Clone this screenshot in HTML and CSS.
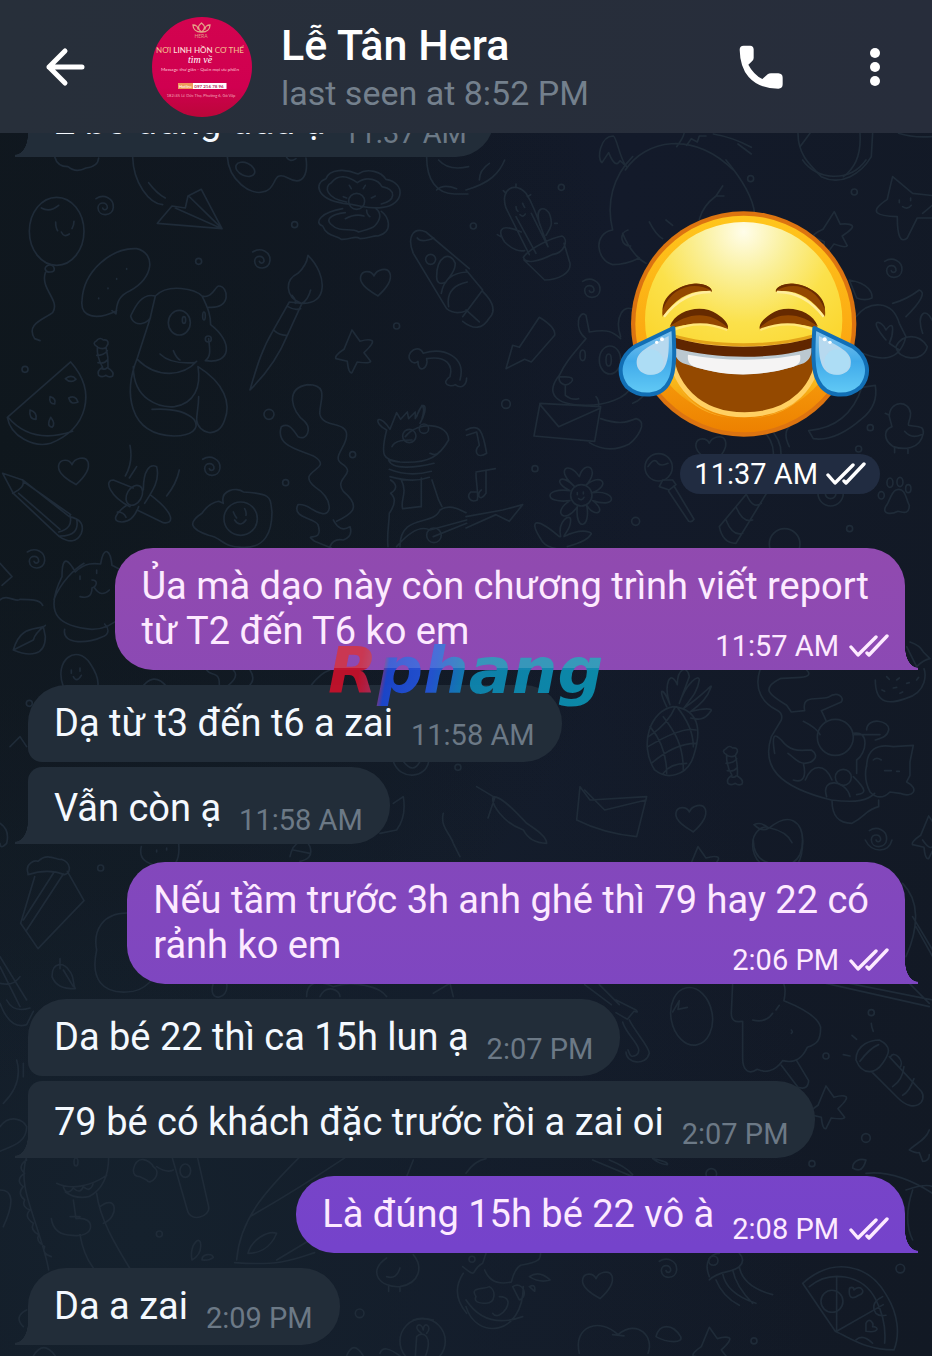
FILE: index.html
```html
<!DOCTYPE html>
<html lang="vi">
<head>
<meta charset="utf-8">
<meta name="viewport" content="width=device-width, initial-scale=1">
<title>Lễ Tân Hera</title>
<link rel="stylesheet" href="styles.css">
</head>
<body>
<svg class="defs" width="0" height="0" aria-hidden="true">
  <defs>
    <symbol id="checks" viewBox="0 0 40 24"><path d="M2 13l7 8L27 3M18 19l2 2L38 2" fill="none" stroke="currentColor" stroke-width="3.4" stroke-linecap="round" stroke-linejoin="round"/></symbol>
  </defs>
</svg>

<div class="app">
  <header class="topbar">
    <button class="icon-btn" type="button" aria-label="Back">
      <svg width="40" height="40" viewBox="0 0 40 40"><path d="M37 20H4M20 4L4 20l16 16" fill="none" stroke="#fff" stroke-width="5" stroke-linecap="round" stroke-linejoin="round"/></svg>
    </button>
    <svg class="avatar" viewBox="0 0 100 100" role="img" aria-label="Hera">
      <defs><linearGradient id="av" x1="0" y1="0" x2="0" y2="1"><stop offset="0" stop-color="#d3034f"/><stop offset=".7" stop-color="#d00050"/><stop offset="1" stop-color="#bb0639"/></linearGradient></defs>
      <circle cx="50" cy="50" r="50" fill="url(#av)"/>
      <g fill="none" stroke="#e5a487" stroke-width="1.3" stroke-linecap="round"><path d="M49 15c-5 0-8-3-8-7 3 0 5 2 5 4M50 15c5 0 8-3 8-7-3 0-5 2-5 4M49.500 15c-4-3-4-6 0-9 4 3 4 6 0 9"/></g>
      <g text-anchor="middle" font-family="Lato, sans-serif">
        <text x="49" y="21" font-size="5" fill="#e39b83">HERA</text>
        <text x="48" y="36" font-size="8" font-weight="500" fill="#f3bd8d">NƠI <tspan fill="#ffe3de">LINH HỒN</tspan> CƠ THỂ</text>
        <text x="48" y="46" font-size="10" font-style="italic" font-family="Liberation Serif, serif" fill="#fff">tìm về</text>
        <text x="48" y="54" font-size="4.600" fill="#ffc7d5">Massage thư giãn - Quên mọi ưu phiền</text>
        <rect x="26" y="66" width="48.500" height="6" fill="#fff"/><rect x="26" y="66" width="15" height="6" fill="#ef9a5a"/>
        <text x="33.500" y="70.500" font-size="4" fill="#fff">Hotline</text>
        <text x="57" y="70.500" font-size="4.500" font-weight="700" fill="#b53162">097 216 78 96</text>
        <text x="49" y="80" font-size="4" fill="#f5a5b8">182/45 Lê Đức Thọ, Phường 6, Gò Vấp</text>
      </g>
    </svg>
    <div class="peer">
      <h1 class="peer-name">Lễ Tân Hera</h1>
      <p class="peer-status">last seen at 8:52 PM</p>
    </div>
    <button class="icon-btn" type="button" aria-label="Call">
      <svg width="46" height="46" viewBox="415 130 138 138"><path d="M420 147q0-12 12-12h20q9 0 10 11v26q0 6-5 10l-11 10q16 30 42 43l16-14q4-3 10-3h22q13 1 13 13v20q0 13-13 13-58 0-89-35-26-30-27-82z" fill="#fff"/></svg>
    </button>
    <button class="icon-btn menu-btn" type="button" aria-label="More options">
      <svg width="12" height="40" viewBox="0 0 12 40" fill="#fff"><circle cx="6" cy="6" r="5"/><circle cx="6" cy="20" r="5"/><circle cx="6" cy="34" r="5"/></svg>
    </button>
  </header>

  <main class="chat">
    <svg class="wallpaper" viewBox="0 133 932 1223" preserveAspectRatio="xMidYMid slice" aria-hidden="true">
      <defs>
        <path id="heart" d="M0 36C-28 20-50 2-46-18c4-20 32-20 40-2C2-40 34-48 42-28 50-4 26 22 6 40z"/>
        <path id="star" d="M-12-62l24 34q26-8 36-2 8 6-24 36l20 26q-2 8-40 2l-16 32q-10 4-14-34l-34-8q-6-8 24-28z"/>
        <path id="spiral" d="M-24-22C0-38 30-22 28 4 26 32-16 34-18 6-18-14 12-14 10 6 6 14-2 12-4 6"/>
        <circle id="dot" r="9"/>
        <g id="candy"><path d="M-18-40q-18-10-2-18 10-12 20-2 16-2 14 12l-6 10q8 30 6 62 20 12 14 24-10 6-20-2-12 8-22 0-6-14 12-24-18-30-16-62zM-18-38q16 8 26 0M-20-14q22 0 32-14M-16 8q20 4 28-8M-4 26q10 4 14-2"/></g>
      </defs>
      <g class="doodles">
        <g transform="translate(0 160) scale(.3333)">
          <ellipse cx="170" cy="214" rx="82" ry="102"/><path d="M124 144q26 14 52-8M167 186q0 18 6 26M222 184q0 12-6 22M184 216q8 18 24 6M150 314c-24 6-14 24 0 22 20 2 14-20 0-22M136 338c-16 50 46 82 22 120-26 20-82 34-54 78l16 6"/>
          <path d="M398-10c2 80 50 140 90 144M446 68q24 32 50 46M472 190l44-52 40 6 8-36 40-20 62 118zM526 144l140 62M566 108l100 98"/>
          <path d="M682-10c4 70 70 120 114 104 36-10 20-66 68-40 50 28 60-20 54-60"/><ellipse cx="736" cy="28" rx="30" ry="19" transform="rotate(25 736 28)"/><path d="M860-8q10 16 28 4M164-10q8 30 40 30 24 20 54 4 36-4 38-30"/>
          <path d="M1030 130c-80-12-90-60-52-74 10-30 60-30 96-14 30-20 70-6 84 16 60 10 56 76-10 84-40 8-60-6-118-12zM1040 126c-60-10-70-46-46-58 20-26 50-20 78 0 30-22 64-8 74 12 46 10 40 42-2 52M1028 146c-60 10-90 40-60 52 14 34 40 26 56 40 30 2 40-14 56-2 24 0 40-10 54-8 50-14 30-60 10-74M1036 158c-50 6-56 22-44 34 30 30 60 8 84 24 20-6 40-10 48-18 20-20 20-40 4-52M1036 176q30-16 56-8M1100 150q0 14 10 20"/><circle cx="1070" cy="124" r="24"/><path d="M1048 76l6 10M1096 76l-6 10M1030 110l10 4M1126 108l-12 6"/>
          <path d="M1280-10c0 70 30 112 84 112h40M1316 0q30 34 90 20M1310 90q20-20 60-4"/>
          <path d="M1340 446L1240 280c-20-50 0-80 38-64l130 110M1340 446q24 20 60 6M1252 234q10 16 50 0M1310 350c0-60 40-80 56-40 0 30-20 40-28 56-20 10-28 0-28-16zM1324 400q10-60 76-64M1346 440q-10-60 56-74"/><circle cx="1292" cy="298" r="15"/>
          <path d="M350 452c-60 30-110 20-104-30 4-90 90-160 164-156 60 14 50 90-20 126-30 14-40 30-42 70l-12-10M350 356v2M380 326v2M324 384v2M296 414v2"/>
          <path d="M466 408c-40-10-60 30-74 60 10 40 60 20 60 0l14-60c40-40 120-20 140 0 20 40 26 60 26 86 70 54 60 120-16 108 20-14 12-40 10-66M606 408c30 10 40-30 50-30 30 0 40 70-30 64M452 470l-40 124c-40 100-30 230 110 234 50 0 80-20 60-50-20-20-60-34-126-30M412 598c60 60 140 50 178 6M400 620c0 100 80 124 124 120 60-10 80-60 70-120 80 50 100 110 80 160-20 60-80 40-84 0 0-20 6-40 6-70M480 582c20 20 50 30 104 26M520 572q10 24 20 28"/><ellipse cx="538" cy="488" rx="33" ry="37"/><ellipse cx="552" cy="480" rx="5" ry="10"/><ellipse cx="612" cy="468" rx="4" ry="12"/><circle cx="625" cy="537" r="9"/>
          <path d="M212 606c80 90 50 200-60 244-50 14-120-20-130-78zM24 772c60 70 140 60 194 42M196 656q20-14 32 2-16 14-32-2zM206 714q20-10 28 12-22 10-28-12zM150 710q20 6 14 22-18 0-14-22zM90 750q22 6 18 28-22 0-18-28zM152 772q16 20 4 30-18-4-4-30z"/>
          <path d="M924 286c60 60 60 150-20 144-50-20-50-70-10-90q26-24 30-54zM876 406q14 16 10 24M932 390q-8 30-26 40M868 426l-50 88c-30 50-46 100-68 176 60-60 90-110 112-164l44-96zM864 440q20 12 38 6M820 510q20 18 42 16"/>
          <path d="M924 674c70 0 30 60 36 90 10 40 80 20 80 60 0 40-50 70-10 90 40 30-30 40 0 80 60 50 20 70-20 90M924 674c-70 10-50 80-10 110 20 20 10 60-20 46-20-30-30-40-50-30-20 60 60 70 100 90 60 40-60 40 0 90 60 40 50 90 20 80-30-6-40-30-70-26-20 40 50 40 60 60 20 60-50 20-10 50l50 20M1000 1080q20 40 50 20 10 30-20 40-30-6-40 20"/>
          <path d="M1160 810c-40-20-30-50 0-16l10 14 20-50 12 20 20-22 4 20 20-20 0 20 20-40q10 10 0 40M1160 810c-20 80-10 90 40 96 90 6 120-20 146-66 0-50-90-60-130-10M1176 860c10-20 40-20 60-20M1250 770c20-60 40-30 10 20M1166 900c10 30 80 24 136 10M1168 928q60 24 126 6M1170 950q70 20 118 2M1204 960c20 40-4 60 4 86M1264 954v86M1210 1046l50-6M1172 960q30 20 0 40 24 20-4 60c0 30-8 60-4 100M1296 960l20 60 10 20M1200 1160c0-100 100-60 120-110 30-20 60 0 78 8M1290 1110l110-30M1300 1130l100-40M1190 1160q60-70 100-50M1290 880q20 10 30-6"/><circle cx="1228" cy="828" r="20"/><circle cx="1272" cy="806" r="14"/><circle cx="1302" cy="1126" r="22"/>
          <path d="M1240 570c-30 20 0 50 14 34 0 40 34 20 26-8 60-10 80 20 70 54-30 20 0 34 16 24 20 16 34-2 34-20M1240 570q20-10 30 10c60-20 130 10 110 80"/>
          <path d="M8 940l60 20 140 110q50 10 36 50-20 40-66 10L40 1000zM68 960q10 20-30 40M72 966l140 98M56 1000l124 108M210 1066q10 40-34 50M230 1078q10 50-50 50"/>
          <path d="M390 1040c-60-30-80-80-50-80l60 24M430 990c0-60 20-80 40-70 10 40-10 70-36 110M450 1004c80 60 70 90 40 84l-74-36M380 1036c-30 20-50 50-14 50 30 0 44-30 50-46M352 1056q20 0 26 16M390 856q10 50-14 92M410 920l-22 34M538 930q-8 40-38 78"/><ellipse cx="403" cy="1006" rx="22" ry="32" transform="rotate(30 403 1006)"/>
          <path d="M670 1030c-10-40 40-50 60-34 90 4 80 20 86 60 0 60-20 110-90 106-60 0-60-30-100-36-60-20-60-40-20-66q20-30 50-36zM700 1056q4 10 10 18M734 1046q6 10 4 20M704 1080q16 24 34 0"/><circle cx="722" cy="1076" r="50"/>
          <use href="#heart" x="1128" y="368"/><use href="#heart" x="222" y="934"/><use href="#star" x="1068" y="572"/><use href="#candy" x="310" y="600"/>
          <use href="#spiral" x="312" y="138"/><use href="#spiral" x="782" y="298"/><use href="#spiral" x="632" y="920"/>
          <use href="#dot" x="884" y="194"/><use href="#dot" x="596" y="304"/><use href="#dot" x="1190" y="498"/><use href="#dot" x="75" y="628"/><circle cx="807" cy="763" r="15"/><use href="#dot" x="1058" y="884"/><use href="#dot" x="857" y="968"/>
        </g>
        <g transform="translate(600 0) scale(.3333)">
          <path d="M80 500c-20-20-30-90-40-92-40 0-50 70-34 80l20-30q20 50 34 24zM76 510c60-90 200-120 324 0M230 440q30-40 20-50M260 436l14-20 18 10 6-18 20 0M340 402q60 10 114 40M414 432l40 30M594 400c0 60 30 90 70 130 60 30 120-10 150-60l4-70M600 440l30-40M780 400q6 90-50 130M896 400q40 14 100 10"/>
        </g>
        <g transform="translate(466 160) scale(.3333)">
          <path d="M0 90c70-20 100-50 116-90M40 60q0-30 30-50"/>
          <path d="M190 284l-70-140c-20-60 30-80 60-44 20 30 30 60 66 160M196 160l50 100M150 170l60 110M166 216c-70-30-70 0-50 30 20 20 40 30 60 26M222 196c-20-60 20-60 30-30 10 30 0 40-12 60M172 292c20-30 90-60 116-64 20 10 10 50-30 56-40 20-80 30-86 8zM174 300l62 60c40 0 80-20 76-50l-18-60M120 100l-8-8M150 82v-10M184 110l10-6M104 230l-10-6M266 190h8M150 140q0 10 6 14M170 130q4 10 6 12M162 164q10 10 16-2"/>
          <path d="M500-10c-60 60-80 140-60 220-60 10-50 90 0 104 30 0 60-10 80-20M780 0c50 60 80 110 86 160M486 210c-30 10-20 50 8 48M470 220c20 50 50 80 70 90M550 186q20 40 40 50M770 78l-20 30h24M750 108q-40 30-50 70M600 180l20 16"/>
          <path d="M1280 50l60 50 90 10-60 50M1280 50q-10 40-16 68c-60 40-30 50 30 52 0 60 10 80 30 64l30-60h60M1300 120v8M1334 114v8M1310 140q16 10 26-4M1010 0c40 60 140 70 190 0"/>
          <use href="#star" x="1106" y="218" transform="rotate(10 1106 218)"/>
          <path d="M120 626l20-70 20 6 60-90q50 30 46 54l-70 80-20-8z"/>
          <path d="M0 330l50 60-60 80M50 394q50 50 20 80-30 50-80 10M0 450l40 36"/>
          <path d="M360 536c-40-30-20-90 0-70l10 50c60-10 70 0 94 20M360 536c-50 60-60 70-80 110-40 50-20 90 80 90 60 0 120-20 140-60M464 530c-20-60 10-100 40-80l14 40M280 650c20 0 50 0 36 16-20 20-40 0-36-16zM298 676v30q20 16 40 10M500 730q30-10 50-50M390 710q10 10 8 30"/><ellipse cx="432" cy="600" rx="32" ry="42"/><ellipse cx="428" cy="600" rx="8" ry="18"/><ellipse cx="350" cy="586" rx="8" ry="16"/>
          <path d="M222 730l182 10-18 104-182-16zM222 734l56 66 126-56M404 776c60 20 80 10 106 0 40 10 0 60-20 76-40 20-80 20-120-4"/>
          <path d="M0 810c40-20 50 0 62 70-30 20-40-10-22-24l-8-40-30 10M30 936l58-10M30 940c0 30 8 60 4 80-20 10-34-10-20-24h20M60 930v70c-20 30-30 0-14-10M0 1070l110-20 60-16-40 50-40-20-90 40"/>
          <g transform="translate(346 1006)"><circle r="32"/><path d="M-20-26c-60-50-20-80 14-30C10-110 60-80 14-30 60-70 90-30 34-8c70-10 80 50 0 24C80 50 40 70 16 30 30 100-20 110-12 34-50 90-90 50-34 16c-80 10-80-40 0-30C-90-40-60-70-20-26M-12-8v6M6-10v6M-8 10q10 8 16-4"/></g>
          <path d="M280 1130c-70-60-90-50-60 0 10 20 20 30 50 36M284 1130c-10-50 30-70 30-50 0 30-20 40-20 50 60-30 90-10 80-6-10 20-50 30-70 36"/>
          <circle cx="578" cy="922" r="41"/><path d="M546 920q20-30 30-10 10 10 30 0M590 960l-10 20 30 10 20-16-10-14zM608 994l60 90q10 4 16-6l-60-100"/>
          <use href="#heart" x="736" y="870"/><path d="M860 980l-100 120q10 50 50 50l110-180M780 1080q20 50 50 40M810 1040q20 50 50 40M840 1000q20 50 46 30"/><circle cx="1094" cy="1000" r="38"/><circle cx="1094" cy="1000" r="16"/><circle cx="956" cy="1152" r="46"/>
          <path d="M1228 676q10 60-40 100-80 70-146 60l-14-24q120-10 160-130zM900 820q30 40 20 80M924 820q30 40 18 86M970 800q-20 20 0 60"/>
          <path d="M1270 770c0-50 60-50 64-10 0 20-10 30-6 36 30 6 46 0 44 24-10 50-60 50-90 40-30-20-30-50-4-60zM1270 766l-12-6M1316 814q20 24 50 10M1286 864v14M1326 864v16"/>
          <path d="M1150 360c60 10 70 40 68 54q-20 10-46 0zM1170 470c40-50 110-50 130 20l20 40c-20 80-80 70-130 50M1280 430q40-10 80-40 30 10-40 80M1260 540c-60-70-10-60 0-30 30-40 20 20 10 40l30 20M1290 560c20-40 70-40 94 0-10 50-90 40-94 0zM1370 520c-20-60 10-80 28-40"/>
          <path d="M1290 990c30-10 30 30 40 46 0 30-20 20-34 18-20 10-50 10-36-16 10-10 14-40 30-48z"/><ellipse cx="1272" cy="968" rx="9" ry="14"/><ellipse cx="1302" cy="966" rx="9" ry="14"/><ellipse cx="1327" cy="986" rx="8" ry="12"/><ellipse cx="1246" cy="1006" rx="9" ry="11"/>
          <use href="#spiral" x="374" y="386"/><use href="#spiral" x="1280" y="326"/>
          <use href="#dot" x="286" y="82"/><use href="#dot" x="22" y="198"/><circle cx="120" cy="732" r="13"/><use href="#dot" x="207" y="926"/><circle cx="509" cy="1084" r="12"/><use href="#dot" x="854" y="56"/><use href="#dot" x="1165" y="96"/><use href="#dot" x="1213" y="803"/><use href="#dot" x="1178" y="867"/><use href="#dot" x="1151" y="1106"/>
        </g>
        <g transform="translate(0 440) scale(.3333)">
          <path d="M186 410c0-70 20-50 40-14 30-30 60-26 76-24 10-60 30-40 34 4l20 10M162 478c20-50 60-90 90-108M186 410c-60 120 0 150 90 158 40 0 70-20 90-40M194 568c-10 50 80 40 110 24 30-10 20-30 10-40M240 408v10M290 390v10M276 420c20 0 14 20 0 24 0 30-20 30-36 26M284 444q20 30 44 6M0 370l36 40-30 26M0 480c20-20 50 10 60-2 30 0 60 0 68 18"/>
          <path d="M40 630c20-70 60-60 90-70l6 30c0 60-50 60-96 40l60-30q4-20 36-44M190 740c-30-80 40-130 80-70 20 30 30 60 20 80M214 690v10M240 684v10M220 710q10 20 24-4M420 750q40-60 80-10M620 690c10 20 40 0 38 46M700 690q20 20-20 50M750 690q20 30-6 50M930 740q30-40 60-50"/>
          <use href="#spiral" x="106" y="358"/>
        </g>
        <g transform="translate(640 600) scale(.3333)">
          <path d="M100 320c90 10 80 90 60 150-20 60-80 70-116 40-50-80-10-180 56-190zM70 350c30 40 60 80 60 160M110 320q50 60 50 120M26 410q60-40 80-90M24 440q100-60 144-50M34 490q70-60 134-60M70 520q20-30 70-30M30 380q50 60 50 140M80 320c-30-60-10-60 10-6-20-60 0-110 22-60 0-50 30-60 36-24l-30 80c20-60 60-90 60-70-6 40-30 60-46 84 60-40 90-80 80-60-10 30-30 50-60 70 40-10 70-10 60 0-20 30-40 24-60 20"/>
          <path d="M500 210c30 30-50 20-80 26-60 30-30 50 20 80l14 20 40-4c-10-50 40-30 70-40 30-20 50 0 40 14l-60 26q10 20 14 30M360 210c-20 60 10 100 50 120q20 10 14 30l-30 50c-30 90 20 150 180 190 80 10 110 0 130-20M404 460c-10-60 0-60 20-40 30 40 60 30 90 30 30 20 0 40-20 40s-30-16-50-30M490 364q40 20 50 40M496 540c20-50 60-50 80 0M640 400c50-10 40 60 10 80v40M640 404h80M680 390c0-40 70-30 66 0-4 20-20 24-40 30M680 500c0-50 30-70 80-60l60-4-10 50 0 40-10 20c40 20 20 50-20 34l-30-4c-20 20-40 20-60 0q-20-40-10-80zM700 480q10-10 24 0M734 512h20M770 514h8M576 600c0 50 20 70 60 70 40-20 40-40 80-50V600M560 590c-20-60 60-50 70 0M640 530c40 40 40 50 10 54M490 490c10 40 0 60-30 50"/><circle cx="586" cy="412" r="54"/><circle cx="610" cy="532" r="24"/>
          <path d="M706 240c0 80 50 70 90 56 70-20 60-80 56-90M800 140l30 60q20-20 40-24l-20-20q-10-20-40-30M740 230l8 8M770 240l8-6M726 270l8 4M760 264l10-2M800 250l8-2M830 240l6-8M780 280l8-4"/>
          <use href="#candy" x="278" y="504"/><use href="#heart" x="154" y="656"/><path d="M388 684c60-50 100-20 100 40 0 60-20 90-60 90-60 0-90-40-90-80 0-40 30-60 50-50M390 684q50 10 66 44M342 674q20-10 44 10-20 14-44-10z"/><use href="#spiral" x="712" y="714" /><use href="#star" x="878" y="710"/><use href="#star" x="186" y="802"/>
          <path d="M-180 560l30 40 170-10-30 120q-100-10-180-50zM-166 570l60 60 124-30M-350 690c-60-20-100-80-90-100 30 0 80 60 100 80 30 20 60 40 60 60-40 0-60-20-70-40zM-440 590l-50-30M-436 594l-20 60"/>
        </g>
        <g transform="translate(0 670) scale(.3333)">
          <path d="M84 610c-10-30 20-40 30-36 30-30 60 0 70-6 30 10 30 40 10 46q-50-20-110 0zM104 620L62 760l52 76 138-144-50-88M160 610L70 750M190 612L80 780M30 230l30-30 20 30M0 460q30 20 20 60-20 20-20 0M424 530c-10 40 20 50 50 60M470 540v6M500 534v6M536 520q4 40-10 60M870 560c10-50 50-60 60-30 10 30-10 40-30 44M880 540l50 10M1180 274c20 60 100 50 106 0M1210 274q30 40 50 0M1330 430c-10 40 20 60 30 90l20 40M1180 400l30-20q10 60-20 100l-50 10"/>
          <path d="M400 730c-100-10-120 60-110 110-20 90 20 130 90 126 40 0 60-20 70-30M156 920c0-50 40-40 50-20 20 20 10 40 20 56-40 0-60-10-70-36zM180 866v30M190 900l30 50M0 860l80 130M0 890l60 120M0 940q40 10 60-20M640 940c-20 60 50 50 40 0M920 980c0-60 60-40 80-30 60-20 140 0 160 30M960 980c20-40 60-20 60 0M1300 970l50-30 10 40"/>
          <use href="#dot" x="302" y="594"/><use href="#dot" x="88" y="100"/><use href="#dot" x="1374" y="292"/>
        </g>
        <g transform="translate(466 840) scale(.3333)">
          <ellipse cx="677" cy="529" rx="62" ry="87" transform="rotate(-10 677 529)"/><path d="M620 516l20-34-4 26 28-6M800 430l-4 90q0 30 30 24M830 544v110c0 40 20 50 44 34 20 10 50 10 76-26 40 10 60-10 74-40 30-10 40-20 40-60q-10-40-110-80 10-50-10-60M860 540q40 10 60-20M946 676l50 66q30 10 32-20l-36-60M930 510l10-14M976 570q6 6 0 10"/>
          <path d="M356 434l80 60M400 434l60 60M450 480l60 30q10 10-6 4l-20 24-34-20M470 546c10 40 70 80 40 100-20 10-20-10-24-16M490 540c20 40 60 80 60 100-10 40-70 30-70-4M1310 130c50 50 50 130 10 220M1340 230l60 100M1350 260l50 90M1080 430l310 70M1150 430l250 50M1300 400l90 90"/>
          <path d="M1170 660c0-50 50-60 70-60 40 20 30 40 10 70-20 30-60 40-80-10zM1216 694l80 80c50 50 90 10 70-20L1270 650M1182 664q30-40 56-50M1274 650c10-20 40 10 30 30M1280 740q30-20 34-60M1310 766q20-10 34-50M1216 550q0 10 6 24M1158 586l14 12M1132 644l20 4"/>
          <path d="M1330 930c20-20 50-30 60-60M1330 930q20 10 30 8l10 26q20 0 20-20M1160 984c0-20 20-30 40-24-10 40-30 30-40 24zM1200 1000q90-10 200 60M1320 1050q60-20 80-10M1340 1050c-20 60-20 110 0 150M0 1000c20-30 40-40 60-44M380 960l120 50M430 960q50 20 70 44M560 956q50 10 44 18-20 0-44-18"/>
          <use href="#star" x="1092" y="800" /><use href="#star" x="742" y="1524"/><use href="#heart" x="396" y="1336"/><use href="#spiral" x="604" y="1286"/><path d="M862 0c0 40 20 60 44 68M1010 0q0 50-30 68M1198 0c20 40 70 40 80 0M1370 0q20 30 30 20"/>
          <path d="M0 1400c30 100 170 90 172-60M0 1380q60 90 170 50M-10 1280c50 40 20 10 60-10l10-30M56 1290q20 50 80 36 10-40 28-50c60-10 60-20 60-40M30 1370c-20-30 20-20 40-30 20 10 20 50-10 50q-40 0-30-20zM100 1370c60 0 0 80-20 50M140 1340c30-20 50 30 20 40zM190 1310q30-20 62 10-30 10-62-10zM190 1340q20-10 16 14z"/>
          <path d="M730 1310c-20-50 10-70 30-70M820 1240q20 20 0 40c-20 20-60 10-90 40M750 1320q20 50 70 76M770 1300q10 60 100 90M800 1290q10 50 60 100M820 1280q10 60 100 84"/><circle cx="742" cy="1262" r="14"/>
          <path d="M1010 1330c90-80 200-60 254 40 30 50 40 110 20 160-80 0-120-30-176-56zM1030 1340c60-50 160-40 200 40 20 40 30 90 26 130M1112 1310v164M1112 1474l140-80M1150 1350c0-10 14-10 14 0 20-20 40 10 14 16q-30 20-28-16zM1200 1450c10-20 24 0 20 10 20 0 20 20-20 14z"/><circle cx="1098" cy="1384" r="33"/><path d="M1250 1370q-40 20-20 50 10 10 30 6M1170 1500q20-20 50 10"/>
          <path d="M340 1540c-20-80 60-110 116-56 60-50 110 10 90 56M440 1484l34 4M570 1490c10-40 50-40 74 0 10 20-40 20-74 0z"/>
          <use href="#dot" x="1216" y="518"/><use href="#dot" x="1080" y="648"/><circle cx="1200" cy="894" r="13"/><use href="#dot" x="1038" y="971"/><circle cx="736" cy="1002" r="16"/><circle cx="1303" cy="1286" r="13"/><use href="#dot" x="864" y="1503"/><use href="#dot" x="18" y="1258"/>
        </g>
        <g transform="translate(0 1000) scale(.3333)">
          <path d="M80 470c-20 60 0 120 20 180 20 60 40 120 46 160M80 480q-30 20-6 40-30 20-4 40-20 20 4 40-10 20 16 30-20 20 10 40-10 20 16 34-10 20 18 36-10 20 20 30M326 470c0 60-20 100-60 120-30 6-50 0-70-14M170 550c40 20 100 10 150-24M190 560q10 30 30 4 20 20 30-4 20 20 30-10M220 600l8 56c60-10 60 60-10 50-40 0-60-20-64-50M210 650h30M290 580c10 80 60 160 100 226M240 704q10 60 40 100M300 620c50-40 60 30 10 50"/><ellipse cx="228" cy="486" rx="6" ry="12"/>
          <path d="M516 470l46 160c10 40 70 20 64-10l-34-150M470 500q30 20 50 10M400 510c10-50 50-30 60-10 30 20-10 60-20 40l-20-10q-20 0-20-20z"/><ellipse cx="556" cy="512" rx="16" ry="20"/>
          <path d="M710 780c10-130 100-220 190-310M704 788c140 10 180-10 240-30M750 650q140-80 290-180M830 780l100-60M744 760c10-40 60-70 86-60-20 50-60 60-86 60zM576 780c-10-50 30-80 26-40 0 20-10 30-26 40zM606 780c0-20 30-20 34-8q-10 10-34 8zM1240 480l-20 50"/>
          <path d="M0 380c30-40 70-20 80 0 0 50-50 60-80 74M50 180q20 70-40 130M70 190v40M0 570q60 0 10 110M0 10q30 80 80 64l20-40M20 0q20 40 70 24M80 930q-40 20-10 50"/>
          <path d="M1160 774c-60 40-20 90 40 86 60-10 70-60 40-96M1160 830q30 10 40-26M1166 860v14M1200 864v10M1390 820q-40 60 10 120M1240 960q20-10 60 0M1040 1068q20-50 50 0M1140 1060q10-30 60 8M100 1068q30-50 66 0"/><circle cx="1268" cy="1024" r="68"/><path d="M1250 1010c20-20 50 0 26 60h-30zM1264 1000c-30-20 0-40 6-10 0-30 30-10 10 10"/>
          <use href="#dot" x="478" y="702"/><circle cx="1079" cy="940" r="13"/>
        </g>
      </g>
    </svg>

    <div class="messages">
      <p class="bubble in last tail">2 bé đang đâu ạ<time>11:37 AM</time></p>

      <div class="sticker">
        <svg class="emoji" viewBox="56 60 756 684" role="img" aria-label="Face with tears of joy">
          <defs>
            <linearGradient id="rim" x1="0" y1="0" x2="0" y2="1"><stop offset="0" stop-color="#ffc61c"/><stop offset=".6" stop-color="#fba711"/><stop offset="1" stop-color="#ed8100"/></linearGradient>
            <radialGradient id="skin" cx=".5" cy=".05" r=".75"><stop offset="0" stop-color="#fffdea"/><stop offset=".3" stop-color="#faf09a"/><stop offset=".62" stop-color="#fbe14b"/><stop offset="1" stop-color="#fbd52b"/></radialGradient>
            <linearGradient id="fade" x1="0" y1="0" x2="0" y2="1"><stop offset="0" stop-color="#fff"/><stop offset=".62" stop-color="#fff"/><stop offset="1" stop-color="#000"/></linearGradient>
            <mask id="low"><rect x="100" y="95" width="670" height="600" fill="url(#fade)"/></mask>
            <linearGradient id="drop" x1="0" y1="0" x2="0" y2="1"><stop offset="0" stop-color="#85c3ec"/><stop offset=".5" stop-color="#40aaea"/><stop offset="1" stop-color="#63cbf6"/></linearGradient>
            <clipPath id="mouthclip"><path d="M212 446c120 40 320 40 446 0 10 150-90 220-222 220S208 590 212 446z"/></clipPath>
            <g id="tear">
              <path d="M222 414c4 70 6 130-12 160-24 50-90 50-128 16-32-40-20-90 24-120z" fill="url(#drop)" stroke="#126fb5" stroke-width="12" stroke-linejoin="round"/>
              <path d="M208 438c2 50-2 80-16 100-20 26-68 20-78-8-10-40 20-54 94-92z" fill="#b7d9ef"/><circle cx="154" cy="516" r="38" fill="#a8dff8" opacity=".65"/>
            </g>
          </defs>
          <circle cx="433" cy="402" r="338" fill="#dc7410"/>
          <circle cx="433" cy="402" r="325" fill="url(#rim)"/>
          <ellipse cx="433" cy="390" rx="296" ry="294" fill="url(#skin)" mask="url(#low)"/>
          <path d="M205 500c20 120 110 185 228 185s210-65 232-185c-20 80-60 185-232 185S225 580 205 500z" fill="#f8ae27"/>
          <g id="brow"><path d="M190 380c-10-60 60-104 106-99 24 2 40 10 42 24-60-10-110 20-148 75z" fill="#934800"/><path d="M190 360c0-50 60-80 106-79 24 2 40 10 42 22-50-30-120-16-148 57z" fill="#6b2c00"/><path d="M194 380q60-76 140-74" fill="none" stroke="#ffed9b" stroke-width="7"/></g>
          <use href="#brow" transform="translate(867 0) scale(-1 1)"/>
          <g id="eye"><path d="M211 416c20-60 100-72 142-42 24 16 34 30 33 44-60-20-120-20-175-2z" fill="#934800"/><path d="M211 410c20-54 100-68 142-38 24 16 34 30 33 42-60-60-130-40-175-4z" fill="#662a00"/><path d="M222 420q80-34 162 0" fill="none" stroke="#ffe77b" stroke-width="7"/></g>
          <use href="#eye" transform="translate(867 0) scale(-1 1)"/>
          <path d="M216 438c120 38 310 38 434 0" fill="none" stroke="#e2a319" stroke-width="14"/>
          <path d="M212 446c120 40 320 40 446 0 10 150-90 228-222 228S208 590 212 446z" fill="#944900" stroke="#ffd063" stroke-width="15"/>
          <g clip-path="url(#mouthclip)"><path d="M212 430h448v46c-130 34-310 36-448 0z" fill="#602600"/><path d="M225 474c120 34 300 36 412 0 0 22-6 36-24 46q-180 66-362 0c-20-10-26-26-26-46z" fill="#bbc8d0"/><path d="M266 494q168 30 336 0c4 22-4 30-20 36q-150 46-292 2c-22-8-26-20-24-38z" fill="#f5f4f4"/></g>
          <path d="M216 447c120 40 310 40 436 0" fill="none" stroke="#602600" stroke-width="14"/>
          <use href="#tear"/><use href="#tear" transform="translate(867 0) scale(-1 1)"/>
          <g fill="#fff"><circle cx="172" cy="457" r="5"/><circle cx="188" cy="448" r="6"/><circle cx="676" cy="448" r="6"/><circle cx="692" cy="457" r="5"/></g>
        </svg>
        <div class="pill"><time>11:37 AM</time><svg class="checks" role="img" aria-label="Read"><use href="#checks"/></svg></div>
      </div>

      <p class="bubble out tail">Ủa mà dạo này còn chương trình viết report<br>từ T2 đến T6 ko em<time>11:57 AM<svg class="checks" role="img" aria-label="Read"><use href="#checks"/></svg></time></p>
      <p class="bubble in first">Dạ từ t3 đến t6 a zai<time>11:58 AM</time></p>
      <p class="bubble in last tail">Vẫn còn ạ<time>11:58 AM</time></p>
      <p class="bubble out tail">Nếu tầm trước 3h anh ghé thì 79 hay 22 có<br>rảnh ko em<time>2:06 PM<svg class="checks" role="img" aria-label="Read"><use href="#checks"/></svg></time></p>
      <p class="bubble in first">Da bé 22 thì ca 15h lun ạ<time>2:07 PM</time></p>
      <p class="bubble in last tail">79 bé có khách đặc trước rồi a zai oi<time>2:07 PM</time></p>
      <p class="bubble out tail">Là đúng 15h bé 22 vô à<time>2:08 PM<svg class="checks" role="img" aria-label="Read"><use href="#checks"/></svg></time></p>
      <p class="bubble in tail">Da a zai<time>2:09 PM</time></p>
    </div>
  </main>
  <span class="watermark">Rphang</span>
</div>
</body>
</html>
```

FILE: styles.css
```css
* { box-sizing: border-box; }

body {
  margin: 0;
  background: #111824;
  color: #fff;
  font-family: Roboto, "Noto Sans", sans-serif;
}

h1, p { margin: 0; }

.defs { position: absolute; }

.app {
  position: relative;
  display: flex;
  flex-direction: column;
  height: 100vh;
  overflow: hidden;
}

/* Header */
.topbar {
  display: flex;
  align-items: center;
  flex: none;
  padding: 17px 51px 16px 45px;
  background: linear-gradient(90deg, #272f3a, #272d3b);
}

.icon-btn {
  display: flex;
  padding: 0;
  border: 0;
  background: none;
}

.menu-btn { margin-left: 85px; }

.avatar {
  flex: none;
  width: 100px;
  height: 100px;
  margin: 0 29px 0 67px;
}

.peer {
  flex: 1;
  min-width: 0;
  white-space: nowrap;
}

.peer-name {
  font-size: 43px;
  font-weight: 500;
  line-height: 52px;
}

.peer-status {
  color: #74808d;
  font-size: 34px;
  line-height: 44px;
}

/* Chat */
.chat {
  position: relative;
  display: flex;
  flex: 1;
  flex-direction: column;
  justify-content: flex-end;
  min-height: 0;
  overflow: hidden;
  background:
    radial-gradient(ellipse at 0 25%, #0f171d, transparent 50%),
    radial-gradient(ellipse at 15% 90%, #15212d, transparent 60%),
    linear-gradient(100deg, #111821, #131a2a 55%, #121924);
}

.wallpaper {
  position: absolute;
  inset: 0;
  width: 100%;
  height: 100%;
}

.doodles {
  fill: none;
  stroke: #1f2b38;
  stroke-width: 5;
  stroke-linecap: round;
  stroke-linejoin: round;
}

.messages {
  position: relative;
  display: flex;
  flex-direction: column;
  align-items: flex-start;
  padding: 0 27px 11px 28px;
}

.bubble {
  position: relative;
  margin-top: 15px;
  padding: 16px 27px 10px 26px;
  border-radius: 38px;
  font-size: 38px;
  line-height: 45px;
}

.bubble::after {
  content: "";
  display: block;
  clear: both;
}

.bubble time {
  display: flex;
  align-items: center;
  float: right;
  gap: 10px;
  margin: 17px 0 0 18px;
  font-size: 29px;
  line-height: 34px;
}

.in {
  background: #222d39;
  color: #f4f9ff;
}

.in time { color: #6c7986; }

.in.tail { border-bottom-left-radius: 0; }

.in.first { border-bottom-left-radius: 14px; }

.in.last {
  margin-top: 5px;
  padding-top: 19px;
  padding-bottom: 7px;
  border-top-left-radius: 14px;
}

.out {
  align-self: flex-end;
  margin-top: 18px;
  padding-right: 36px;
  padding-bottom: 7px;
  border-bottom-right-radius: 0;
  background: linear-gradient(#a04e9e, #904ab0 42%, #8147be 68%, #7543cb 92%) fixed;
  color: #fdeaff;
}

.out time {
  margin-top: 20px;
  margin-right: -20px;
}

.tail::before {
  content: "";
  position: absolute;
  bottom: 0;
  width: 13px;
  height: 22px;
  background: inherit;
}

.in.tail::before {
  right: 100%;
  mask: radial-gradient(ellipse 13px 20px at 0 0, transparent 97%, #000);
}

.out.tail::before {
  left: 100%;
  mask: radial-gradient(ellipse 13px 20px at 100% 0, transparent 97%, #000);
}

.checks {
  width: 40px;
  height: 24px;
}

.sticker {
  display: flex;
  flex-direction: column;
  align-items: flex-end;
  align-self: flex-end;
  gap: 16px;
  margin: 53px 25px 36px 0;
}

.emoji {
  width: 252px;
  height: 228px;
  margin-right: 10px;
}

.pill {
  display: flex;
  align-items: center;
  gap: 8px;
  height: 40px;
  padding: 0 14px;
  border-radius: 20px;
  background: #212c41;
  font-size: 29px;
}

/* Overlay mark across the conversation */
.watermark {
  position: absolute;
  top: 634px;
  left: 328px;
  font: italic 700 64px/74px "DejaVu Sans", sans-serif;
  color: transparent;
  background:
    linear-gradient(rgba(255, 255, 255, .16) 46%, transparent 46%),
    linear-gradient(100deg, #c5112b 13%, #a73062 20%, #1b47cf 23%, #2454d6 38%, #0e86b0 52%, #0b8fae);
  background-clip: text;
  -webkit-background-clip: text;
  opacity: .95;
  pointer-events: none;
}
```
